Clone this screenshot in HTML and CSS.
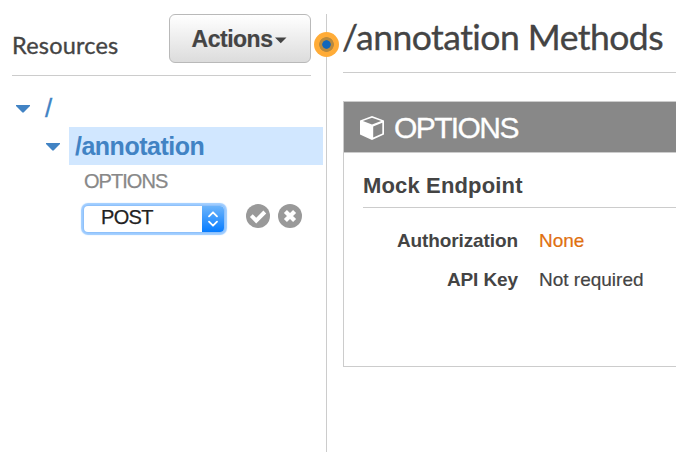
FILE: index.html
```html
<!DOCTYPE html>
<html lang="en">
<head>
<meta charset="utf-8">
<title>/annotation Methods</title>
<link rel="stylesheet" href="styles.css">
</head>
<body>
<div class="app">
  <aside class="sidebar">
    <header class="sidebar-head">
      <h2 class="sidebar-title"><span>Resources</span></h2>
      <button class="actions"><span>Actions</span><svg width="12" height="7" viewBox="0 0 12 7"><path d="M0 .5h11.5L5.75 6.3z" fill="#444"/></svg></button>
    </header>
    <nav class="tree">
      <div class="node root">
        <svg class="caret" width="14" height="8" viewBox="0 0 14 8"><path d="M0 0h14v1L7.8 7.3q-.8.8-1.6 0L0 1z" fill="#4183c4"/></svg>
        <span class="slash">/</span>
      </div>
      <div class="node child">
        <svg class="caret" width="14" height="8" viewBox="0 0 14 8"><path d="M0 0h14v1L7.8 7.3q-.8.8-1.6 0L0 1z" fill="#4183c4"/></svg>
        <span class="selected"><span>/annotation</span></span>
      </div>
      <div class="method"><span>OPTIONS</span></div>
      <div class="picker">
        <div class="select">
          <span class="value"><span>POST</span></span>
          <span class="stepper"><svg width="12" height="18" viewBox="0 0 12 18" fill="none" stroke="#fff" stroke-width="1.8" stroke-linecap="round" stroke-linejoin="round"><path d="M2 6.3l4-4 4 4M2 11.7l4 4 4-4"/></svg></span>
        </div>
        <svg class="confirm" width="24" height="24" viewBox="0 0 24 24"><circle cx="12" cy="12" r="12" fill="#999"/><path d="M5.300 11.700l4.900 4.900 8.600-8.600" fill="none" stroke="#fff" stroke-width="4"/></svg>
        <svg class="cancel" width="24" height="24" viewBox="0 0 24 24"><circle cx="12" cy="12" r="12" fill="#999"/><path d="M7.400 7.400l9.200 9.200M16.600 7.400l-9.200 9.200" stroke="#fff" stroke-width="4.300"/></svg>
      </div>
    </nav>
  </aside>
  <div class="divider"><span class="handle"></span></div>
  <main class="content">
    <h1 class="title"><span>/annotation Methods</span></h1>
    <section class="panel">
      <header class="panel-head">
        <svg class="cube" width="24" height="24" viewBox="0 0 24 24"><path d="M12 0l12 4.500v14L12 24 0 18.500v-14z" fill="#fff"/><path d="M2.800 5L12 1.800l9.200 3.200L12 8.500zM13.200 10.400l9.100-3.700v10.700l-9.100 4.200z" fill="#888"/></svg>
        <span>OPTIONS</span>
      </header>
      <div class="panel-body">
        <h3 class="endpoint"><span>Mock Endpoint</span></h3>
        <dl class="props">
          <dt><span class="auth">Authorization</span></dt><dd><span class="none">None</span></dd>
          <dt><span class="key">API Key</span></dt><dd><span class="required">Not required</span></dd>
        </dl>
      </div>
    </section>
  </main>
</div>
</body>
</html>
```
FILE: styles.css
```css
* { box-sizing: border-box; }
body { margin: 0; background: #fff; color: #444; font-family: "Liberation Sans", Arial, sans-serif; }
h1, h2, h3, dl, dd { margin: 0; }
svg { display: block; flex: none; }
.app { display: flex; width: 676px; height: 452px; padding-top: 14px; overflow: hidden; }
.sidebar { flex: none; width: 326px; padding-left: 12px; }
.sidebar-head { display: flex; justify-content: space-between; width: 299px; height: 62px; border-bottom: 1px solid #ccc; }
.sidebar-title { padding-top: 16px; font: 400 23.5px/30px Lato, sans-serif; letter-spacing: .2px; -webkit-text-stroke: .35px #444; }
.actions { display: flex; align-items: center; justify-content: center; gap: 3px; width: 142px; height: 49px; padding: 1px 1px 0 0; border: 1px solid #b9b9b9; border-radius: 6px; background: linear-gradient(#fff, #dcdcdc); color: #444; font: 700 23px/28px "Liberation Sans", Arial, sans-serif; letter-spacing: -.5px; -webkit-text-stroke: .2px #444; }
.actions svg { margin-top: 2px; }
.tree { padding-top: 13px; }
.node { display: flex; align-items: center; height: 38px; color: #4183c4; }
.root { padding-left: 4px; }
.caret { margin-top: 1px; }
.slash { margin-left: 15px; padding-top: 1px; font-size: 26px; -webkit-text-stroke: .3px #4183c4; }
.child { padding-left: 34px; }
.selected { width: 254px; height: 38px; margin-left: 9px; padding-left: 6px; background: #d1e7ff; font-size: 25px; font-weight: 700; letter-spacing: -.5px; line-height: 39px; }
.method { height: 34px; padding-left: 72px; color: #888; font-size: 20px; line-height: 32px; letter-spacing: -.95px; -webkit-text-stroke: .25px #888; }
.picker { display: flex; align-items: center; height: 38px; padding-left: 72px; }
.select { display: flex; width: 140px; height: 26px; margin-top: 1px; border-radius: 4px; background: #fff; box-shadow: 0 0 0 1px #8fc1fa, 0 0 1px 3px #9ccbff; }
.value { flex: 1; padding-left: 17px; color: #222; font-size: 20px; line-height: 22px; letter-spacing: -.7px; -webkit-text-stroke: .25px #222; }
.stepper { display: grid; place-items: center; width: 22px; border-radius: 0 4px 4px 0; background: linear-gradient(#6cb4fb, #067cff); }
.confirm { margin-left: 22px; margin-top: -4px; }
.cancel { margin-left: 8px; margin-top: -4px; }
.divider { position: relative; flex: none; width: 1px; background: #ccc; }
.handle { position: absolute; left: -12px; top: 18px; width: 25px; height: 25px; border-radius: 50%; background: radial-gradient(circle, #1166bb 0 3.900px, #b98a3e 4.600px 7px, #ffac38 7.700px); }
.content { flex: 1; min-width: 0; padding-left: 16px; }
.title { height: 59px; margin-left: -1px; font: 400 35.5px/46px Lato, sans-serif; font-variant-ligatures: none; letter-spacing: -.53px; white-space: nowrap; -webkit-text-stroke: .35px #444; box-shadow: inset 0 -1px #ccc; clip-path: inset(0 0 0 1px); }
.panel { height: 266px; margin-top: 28px; border: 1px solid #ccc; border-right: 0; }
.panel-head { display: flex; align-items: center; gap: 11px; height: 51px; padding-left: 16px; border-bottom: 1px solid #ccc; background: #888; color: #fff; font-size: 30px; line-height: 50px; letter-spacing: -1.6px; -webkit-text-stroke: .3px #fff; }
.panel-head span { padding-top: 2px; margin-left: -1px; }
.cube { margin-top: 2px; }
.panel-body { padding-left: 19px; }
.endpoint { height: 55px; padding-top: 15px; border-bottom: 1px solid #ccc; font-size: 22px; line-height: 35px; letter-spacing: .15px; }
.props { display: grid; grid-template-columns: 155px 1fr; column-gap: 21px; grid-auto-rows: 39px; padding-top: 13px; font-size: 19px; line-height: 39px; white-space: nowrap; }
dt { font-weight: 700; text-align: right; letter-spacing: -.1px; }
dd { -webkit-text-stroke: .2px currentColor; }
.none { color: #e07010; }
```
